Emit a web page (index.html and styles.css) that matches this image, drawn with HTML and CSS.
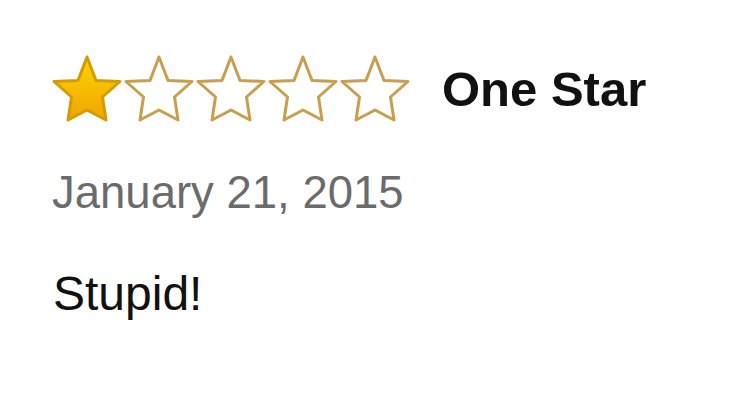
FILE: index.html
```html
<!DOCTYPE html>
<html lang="en">
<head>
<meta charset="UTF-8">
<title>Review</title>
<link rel="stylesheet" href="styles.css">
</head>
<body>
<div class="review">
  <div class="rating-row">
    <div class="stars">
      <svg class="star" viewBox="0 0 72 72" width="72" height="72">
        <defs>
          <linearGradient id="gold" x1="0" y1="0" x2="0" y2="1">
            <stop offset="0" stop-color="#ffd400"/>
            <stop offset="1" stop-color="#efa500"/>
          </linearGradient>
        </defs>
        <polygon class="full" points="36,4 45,27.5 69,28.5 51.5,44 55,67 36,57 17,67 20.5,44 3,28.5 27,27.5"/>
      </svg>
      <svg class="star" viewBox="0 0 72 72" width="72" height="72">
        <polygon class="empty" points="36,4 45,27.5 69,28.5 51.5,44 55,67 36,57 17,67 20.5,44 3,28.5 27,27.5"/>
      </svg>
      <svg class="star" viewBox="0 0 72 72" width="72" height="72">
        <polygon class="empty" points="36,4 45,27.5 69,28.5 51.5,44 55,67 36,57 17,67 20.5,44 3,28.5 27,27.5"/>
      </svg>
      <svg class="star" viewBox="0 0 72 72" width="72" height="72">
        <polygon class="empty" points="36,4 45,27.5 69,28.5 51.5,44 55,67 36,57 17,67 20.5,44 3,28.5 27,27.5"/>
      </svg>
      <svg class="star" viewBox="0 0 72 72" width="72" height="72">
        <polygon class="empty" points="36,4 45,27.5 69,28.5 51.5,44 55,67 36,57 17,67 20.5,44 3,28.5 27,27.5"/>
      </svg>
    </div>
    <h1 class="title">One Star</h1>
  </div>
  <div class="date">January 21, 2015</div>
  <p class="body">Stupid!</p>
</div>
</body>
</html>
```

FILE: styles.css
```css
body {
    margin: 0;
    background: #fff;
    font-family: "Liberation Sans", Arial, sans-serif;
}
.review {
    padding: 53px 0 0 51px;
}
.rating-row {
    display: flex;
    align-items: center;
    height: 72px;
}
.stars {
    display: flex;
}
.star {
    display: block;
    overflow: visible;
}
.full {
    fill: url(#gold);
    stroke: #d49c00;
    stroke-width: 3;
    stroke-linejoin: round;
}
.empty {
    fill: #fff;
    stroke: #c99e4c;
    stroke-width: 3;
    stroke-linejoin: round;
}
.title {
    margin: 0 0 0 31px;
    font-size: 49px;
    font-weight: bold;
    color: #111;
}
.date {
    margin: 42px 0 0 1px;
    font-size: 45.5px;
    line-height: 52px;
    color: #6b6b6b;
}
.body {
    margin: 48px 0 0 2px;
    font-size: 48px;
    line-height: 54px;
    color: #111;
}
```
